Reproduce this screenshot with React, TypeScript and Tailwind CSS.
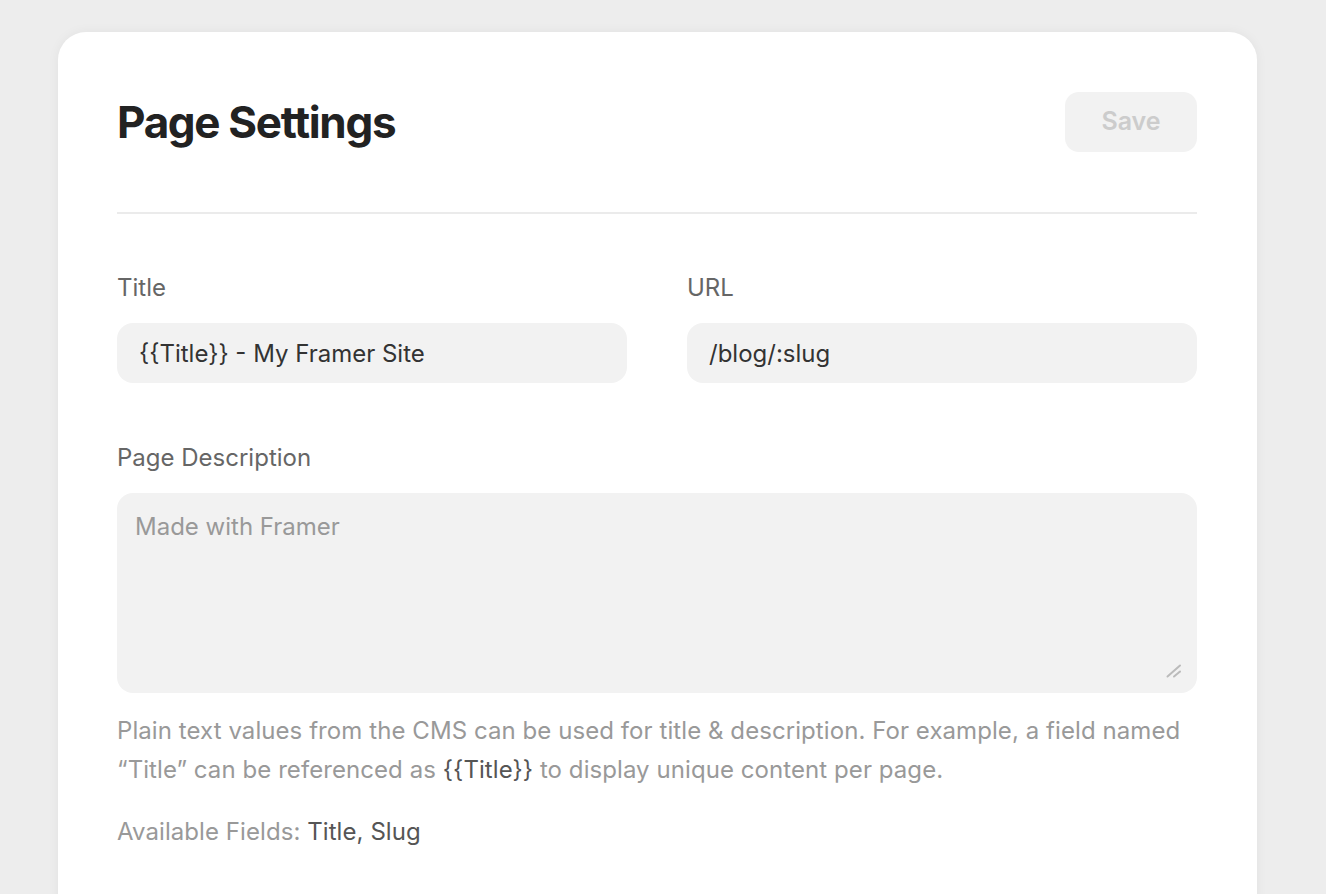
import { useState } from "react";

function Field({ label, value, onChange }: { label: string; value: string; onChange: (v: string) => void }) {
  return (
    <label className="flex flex-1 flex-col gap-[21px]">
      <span className="text-[24px] leading-[28px] text-[#666666]">{label}</span>
      <input
        className="h-[60px] w-full rounded-[16px] bg-[#f2f2f2] px-[22px] text-[24px] text-[#333333] outline-none"
        value={value}
        onChange={(e) => onChange(e.target.value)}
      />
    </label>
  );
}

export default function App() {
  const [title, setTitle] = useState("{{Title}} - My Framer Site");
  const [url, setUrl] = useState("/blog/:slug");
  const [description, setDescription] = useState("");

  return (
    <div
      className="min-h-screen bg-[#ededed] pt-8 pl-[58px]"
      style={{ fontFamily: "Inter, 'Noto Sans', sans-serif" }}
    >
      <div className="w-[1199px] rounded-t-[28px] bg-white pr-[60px] pl-[59px] pt-[60px] pb-[80px] shadow-[0_0_12px_rgba(0,0,0,0.05)]">
        <div className="flex h-[60px] items-center justify-between">
          <h1 className="text-[44px] font-bold tracking-[-0.03em] text-[#222222]">Page Settings</h1>
          <button
            type="button"
            disabled
            className="h-[60px] w-[132px] rounded-[14px] bg-[#f2f2f2] text-[25px] font-semibold text-[#cccccc]"
          >
            Save
          </button>
        </div>

        <div className="mt-[60px] mb-[60px] h-[2px] bg-[#ebebeb]" />

        <div className="flex gap-[60px]">
          <Field label="Title" value={title} onChange={setTitle} />
          <Field label="URL" value={url} onChange={setUrl} />
        </div>

        <label className="mt-[61px] flex flex-col gap-[21px]">
          <span className="text-[24px] leading-[28px] text-[#666666]">Page Description</span>
          <div className="relative">
            <textarea
              className="block h-[200px] w-full resize-none rounded-[16px] bg-[#f2f2f2] px-[18px] py-[20px] text-[24px] leading-[28px] text-[#333333] outline-none placeholder:text-[#999999]"
              placeholder="Made with Framer"
              value={description}
              onChange={(e) => setDescription(e.target.value)}
            />
            <svg
              className="pointer-events-none absolute right-[15px] bottom-[15px]"
              width="16"
              height="14"
              viewBox="0 0 16 14"
              fill="none"
              stroke="#bbbbbb"
              strokeWidth="2"
              strokeLinecap="round"
            >
              <path d="M1.5 12.5 L14 1.5" />
              <path d="M8 12.5 L14 7.5" />
            </svg>
          </div>
        </label>

        <p className="mt-[18px] text-[24px] leading-[39px] tracking-[0.003em] text-[#999999]">
          Plain text values from the CMS can be used for title &amp; description. For example, a field named
          “Title” can be referenced as <span className="text-[#555555]">{"{{Title}}"}</span> to display unique
          content per page.
        </p>
        <p className="mt-[23px] text-[24px] leading-[39px] tracking-[0.003em] text-[#999999]">
          Available Fields: <span className="text-[#555555]">Title, Slug</span>
        </p>
      </div>
    </div>
  );
}
